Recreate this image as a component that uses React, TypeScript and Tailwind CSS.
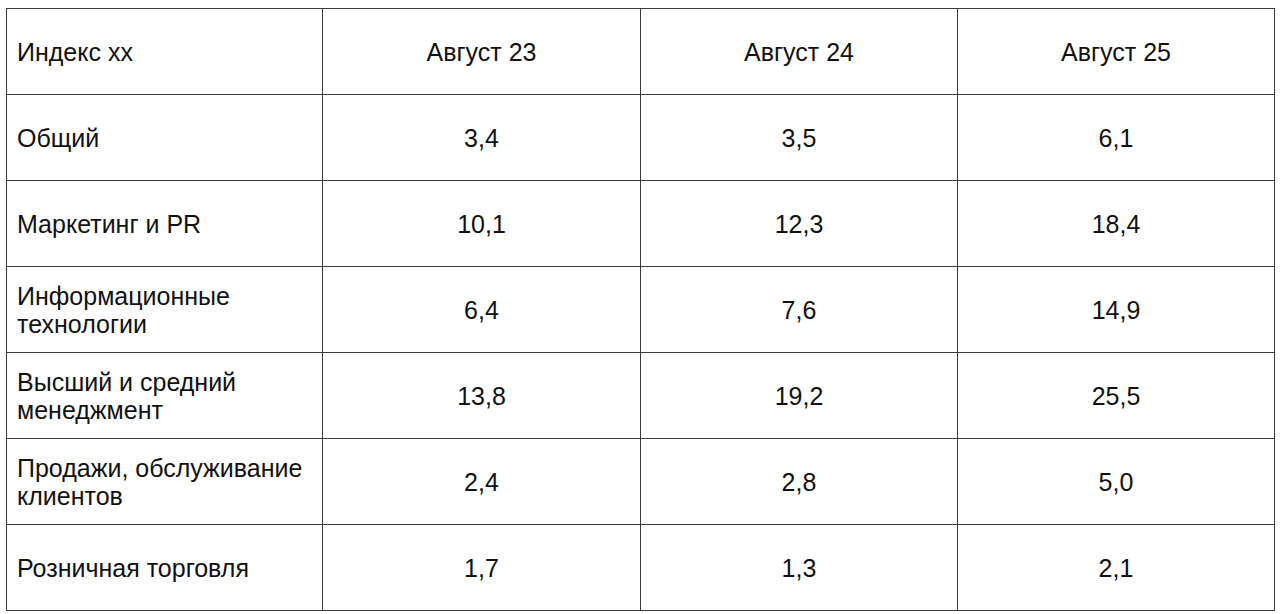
const header = ["Индекс хх", "Август 23", "Август 24", "Август 25"]

const rows: [string, string, string, string][] = [
  ["Общий", "3,4", "3,5", "6,1"],
  ["Маркетинг и PR", "10,1", "12,3", "18,4"],
  ["Информационные технологии", "6,4", "7,6", "14,9"],
  ["Высший и средний менеджмент", "13,8", "19,2", "25,5"],
  ["Продажи, обслуживание клиентов", "2,4", "2,8", "5,0"],
  ["Розничная торговля", "1,7", "1,3", "2,1"],
]

export default function App() {
  return (
    <div className="w-[1280px] h-[614px] bg-white pl-[6px] pt-[8px] font-['Liberation_Sans',Arial,sans-serif] text-[25px] leading-[28px] text-[#111]">
      <table className="w-[1268px] table-fixed border-collapse">
        <colgroup>
          <col className="w-[316px]" />
          <col className="w-[318px]" />
          <col className="w-[317px]" />
          <col className="w-[317px]" />
        </colgroup>
        <tbody>
          <tr className="h-[86px]">
            {header.map((h, i) => (
              <td
                key={h}
                className={`border border-[#3a3a3a] ${i === 0 ? "pl-[10px] text-left" : "text-center"}`}
              >
                {h}
              </td>
            ))}
          </tr>
          {rows.map((r) => (
            <tr key={r[0]} className="h-[86px]">
              <td className="border border-[#3a3a3a] pl-[10px] pr-[2px] text-left">{r[0]}</td>
              <td className="border border-[#3a3a3a] text-center">{r[1]}</td>
              <td className="border border-[#3a3a3a] text-center">{r[2]}</td>
              <td className="border border-[#3a3a3a] text-center">{r[3]}</td>
            </tr>
          ))}
        </tbody>
      </table>
    </div>
  )
}
